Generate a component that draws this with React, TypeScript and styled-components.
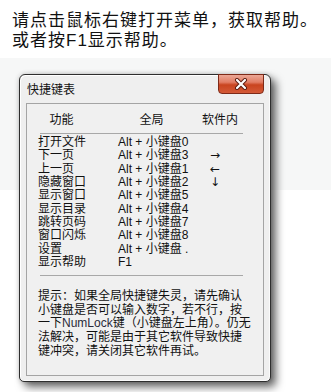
import React from "react";
import styled, { createGlobalStyle } from "styled-components";

const GlobalStyle = createGlobalStyle`
  html, body { margin: 0; padding: 0; }
  body {
    background: linear-gradient(to bottom, #fff 0, #fff 58px, #f6f7f7 58px, #f6f7f7 190px, #fff 190px);
    font-family: "Liberation Sans", "Noto Sans CJK SC", sans-serif;
    color: #111;
  }
`;

const Page = styled.div`
  width: 331px;
  height: 392px;
  overflow: hidden;
`;

const Intro = styled.div`
  padding: 11px 0 0 12px;
  font-size: 17px;
  line-height: 19.5px;
  letter-spacing: 1px;
  color: #111;
`;

const Window = styled.div`
  box-sizing: border-box;
  width: 252px;
  height: 308px;
  margin: 24px 0 0 19px;
  border: 1px solid #2e2e2e;
  border-radius: 6px 6px 5px 5px;
  background: #efefef;
  box-shadow: inset 1px 1px 0 #fff, inset -1px -1px 0 #fafafa,
    5px 5px 9px rgba(0, 0, 0, 0.6), 0 0 5px rgba(0, 0, 0, 0.18);
  display: flex;
  flex-direction: column;
  padding: 0 6px 5px;
`;

const TitleBar = styled.div`
  height: 28px;
  display: flex;
  align-items: center;
  justify-content: space-between;
  padding-left: 1px;
`;

const Title = styled.span`
  font-size: 12px;
  line-height: 14px;
  color: #111;
  margin-top: 1px;
`;

const CloseButton = styled.div`
  align-self: flex-start;
  margin-top: -1px;
  box-sizing: border-box;
  width: 46px;
  height: 20px;
  border: 1px solid #7e2a18;
  border-radius: 0 0 4px 4px;
  background: linear-gradient(to bottom, #eba796 0%, #e27d64 40%, #c9441f 55%, #d45a38 100%);
  display: flex;
  align-items: center;
  justify-content: center;
`;

const Panel = styled.div`
  flex: 1;
  border: 1px solid #a4a4a4;
  background: #f0f0f0;
  padding: 8px 0 0 11px;
  font-size: 12px;
`;

const HeaderRow = styled.div`
  display: grid;
  grid-template-columns: 47px 33px 67px 12px 46px;
  line-height: 16px;
`;

const HeadCell = styled.div<{ $col: number }>`
  grid-column: ${(p) => p.$col};
  text-align: center;
  white-space: nowrap;
`;

const Divider = styled.div<{ $top: number; $bottom: number }>`
  width: 203px;
  height: 1px;
  margin: ${(p) => p.$top}px 0 ${(p) => p.$bottom}px 2px;
  background: #a8a8a8;
`;

const Rows = styled.div`
  display: grid;
  grid-template-columns: 80px 80px 34px;
  grid-auto-rows: 13.33px;
  line-height: 13.33px;
`;

const Cell = styled.div`
  white-space: nowrap;
`;

const ArrowCell = styled.div`
  text-align: center;
  font-family: "DejaVu Sans", sans-serif;
  font-size: 12px;
  color: #111;
`;

const Hint = styled.div`
  line-height: 13.6px;
  white-space: nowrap;
`;

const Latin = styled.span`
  color: #2a2a3a;
`;

const rows: [string, string, string][] = [
  ["打开文件", "Alt + 小键盘0", ""],
  ["下一页", "Alt + 小键盘3", "→"],
  ["上一页", "Alt + 小键盘1", "←"],
  ["隐藏窗口", "Alt + 小键盘2", "↓"],
  ["显示窗口", "Alt + 小键盘5", ""],
  ["显示目录", "Alt + 小键盘4", ""],
  ["跳转页码", "Alt + 小键盘7", ""],
  ["窗口闪烁", "Alt + 小键盘8", ""],
  ["设置", "Alt + 小键盘 .", ""],
  ["显示帮助", "F1", ""],
];

export default function App() {
  return (
    <Page>
      <GlobalStyle />
      <Intro>
        请点击鼠标右键打开菜单，获取帮助。
        <br />
        或者按F1显示帮助。
      </Intro>
      <Window>
        <TitleBar>
          <Title>快捷键表</Title>
          <CloseButton>
            <svg width="14" height="12" viewBox="0 0 14 12">
              <path d="M3 2 L11 10 M11 2 L3 10" stroke="#5a1a0e" strokeWidth="4" strokeLinecap="round" />
              <path d="M3 2 L11 10 M11 2 L3 10" stroke="#fff" strokeWidth="2.2" strokeLinecap="round" />
            </svg>
          </CloseButton>
        </TitleBar>
        <Panel>
          <HeaderRow>
            <HeadCell $col={1}>功能</HeadCell>
            <HeadCell $col={3}>全局</HeadCell>
            <HeadCell $col={5}>软件内</HeadCell>
          </HeaderRow>
          <Divider $top={5} $bottom={2} />
          <Rows>
            {rows.map(([a, b, c]) => (
              <React.Fragment key={a}>
                <Cell>{a}</Cell>
                <Cell>{b}</Cell>
                <ArrowCell>{c}</ArrowCell>
              </React.Fragment>
            ))}
          </Rows>
          <Divider $top={6} $bottom={14} />
          <Hint>
            提示：如果全局快捷键失灵，请先确认
            <br />
            小键盘是否可以输入数字，若不行，按
            <br />
            一下<Latin>NumLock</Latin>键（小键盘左上角）。仍无
            <br />
            法解决，可能是由于其它软件导致快捷
            <br />
            键冲突，请关闭其它软件再试。
          </Hint>
        </Panel>
      </Window>
    </Page>
  );
}
